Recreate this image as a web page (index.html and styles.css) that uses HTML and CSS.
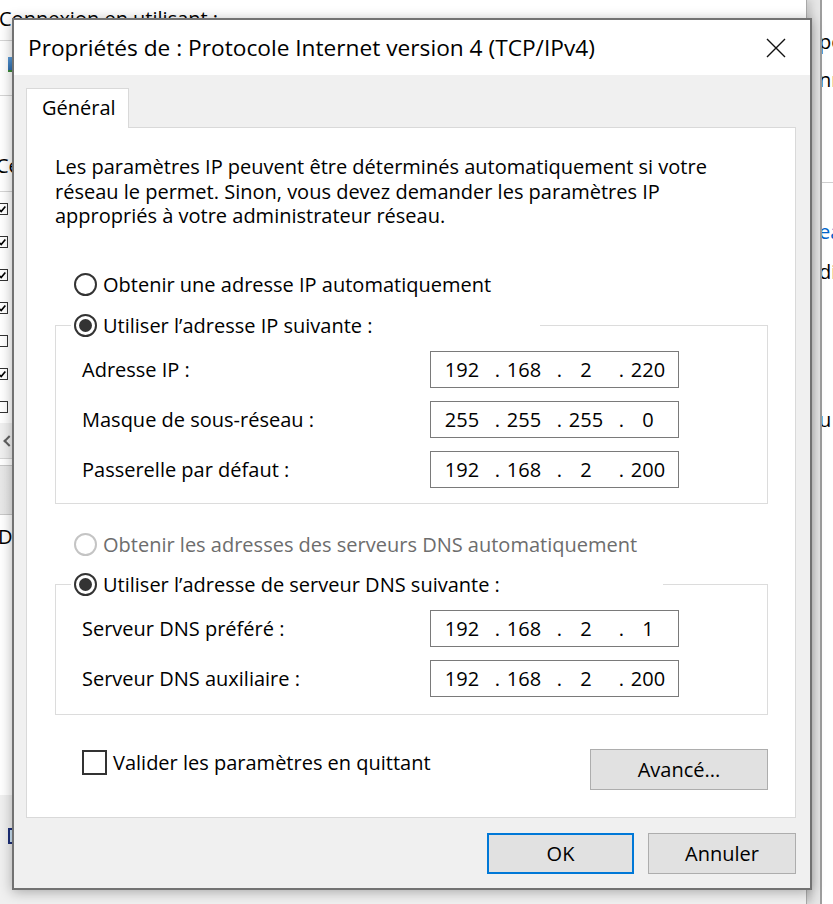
FILE: index.html
```html
<!DOCTYPE html>
<html lang="fr">
<head>
<meta charset="utf-8">
<title>Propriétés de : Protocole Internet version 4 (TCP/IPv4)</title>
<link rel="stylesheet" href="styles.css">
</head>
<body>
<div class="desktop">
  <div class="parent-win">
    <div class="pw-caption">Connexion en utilisant :</div>
    <div class="pw-adapter"><span class="pw-adapter-icon"></span></div>
    <div class="pw-label">Cette connexion utilise les éléments suivants :</div>
    <ul class="pw-list">
      <li><span class="pw-check"><svg viewBox="0 0 12 12"><path d="M2 6 L5 9 L10 3"/></svg></span></li>
      <li><span class="pw-check"><svg viewBox="0 0 12 12"><path d="M2 6 L5 9 L10 3"/></svg></span></li>
      <li><span class="pw-check"><svg viewBox="0 0 12 12"><path d="M2 6 L5 9 L10 3"/></svg></span></li>
      <li><span class="pw-check"><svg viewBox="0 0 12 12"><path d="M2 6 L5 9 L10 3"/></svg></span></li>
      <li><span class="pw-check"></span></li>
      <li><span class="pw-check"><svg viewBox="0 0 12 12"><path d="M2 6 L5 9 L10 3"/></svg></span></li>
      <li><span class="pw-check"></span></li>
    </ul>
    <div class="pw-scroll"><span class="pw-arrow"></span></div>
    <div class="pw-btnrow"></div>
    <div class="pw-desc">Description</div>
    <div class="pw-footer"><span class="pw-focus"></span></div>
  </div>

  <div class="right-win">
    <div class="rw-line rw-1">pe</div>
    <div class="rw-line rw-2">nn</div>
    <div class="rw-sep"></div>
    <div class="rw-line rw-3 rw-link">ea</div>
    <div class="rw-line rw-4">di</div>
    <div class="rw-line rw-5">u</div>
  </div>

  <div class="dialog">
    <div class="titlebar">
      <span class="title">Propriétés de : Protocole Internet version 4 (TCP/IPv4)</span>
      <svg class="close" viewBox="0 0 20 20" aria-label="Fermer"><path d="M1 1 L19 19 M19 1 L1 19" /></svg>
    </div>
    <div class="dlg-body">
      <div class="tabs"><div class="tab">Général</div></div>
      <div class="panel">
        <p class="intro">Les paramètres IP peuvent être déterminés automatiquement si votre<br>réseau le permet. Sinon, vous devez demander les paramètres IP<br>appropriés à votre administrateur réseau.</p>

        <label class="radio-row first"><span class="radio"></span><span>Obtenir une adresse IP automatiquement</span></label>

        <fieldset class="group group-ip">
          <legend class="legend legend-ip"><span class="radio checked"></span><span>Utiliser l’adresse IP suivante :</span></legend>
          <div class="rows">
            <div class="field-row"><span class="field-label">Adresse IP :</span>
              <span class="ip"><span class="oct">192</span><span class="dot">.</span><span class="oct">168</span><span class="dot">.</span><span class="oct">2</span><span class="dot">.</span><span class="oct">220</span></span></div>
            <div class="field-row"><span class="field-label">Masque de sous-réseau :</span>
              <span class="ip"><span class="oct">255</span><span class="dot">.</span><span class="oct">255</span><span class="dot">.</span><span class="oct">255</span><span class="dot">.</span><span class="oct">0</span></span></div>
            <div class="field-row"><span class="field-label">Passerelle par défaut :</span>
              <span class="ip"><span class="oct">192</span><span class="dot">.</span><span class="oct">168</span><span class="dot">.</span><span class="oct">2</span><span class="dot">.</span><span class="oct">200</span></span></div>
          </div>
        </fieldset>

        <label class="radio-row disabled"><span class="radio"></span><span>Obtenir les adresses des serveurs DNS automatiquement</span></label>

        <fieldset class="group group-dns">
          <legend class="legend legend-dns"><span class="radio checked"></span><span>Utiliser l’adresse de serveur DNS suivante :</span></legend>
          <div class="rows rows-dns">
            <div class="field-row"><span class="field-label">Serveur DNS préféré :</span>
              <span class="ip"><span class="oct">192</span><span class="dot">.</span><span class="oct">168</span><span class="dot">.</span><span class="oct">2</span><span class="dot">.</span><span class="oct">1</span></span></div>
            <div class="field-row"><span class="field-label">Serveur DNS auxiliaire :</span>
              <span class="ip"><span class="oct">192</span><span class="dot">.</span><span class="oct">168</span><span class="dot">.</span><span class="oct">2</span><span class="dot">.</span><span class="oct">200</span></span></div>
          </div>
        </fieldset>

        <div class="bottom-row">
          <label class="check-row"><span class="checkbox"></span><span>Valider les paramètres en quittant</span></label>
          <button class="btn btn-adv" type="button">Avancé...</button>
        </div>
      </div>
      <div class="buttons">
        <button class="btn btn-ok" type="button">OK</button>
        <button class="btn" type="button">Annuler</button>
      </div>
    </div>
  </div>
</div>
</body>
</html>
```

FILE: styles.css
```css
* { box-sizing: border-box; }
html, body { margin: 0; padding: 0; }
body {
  width: 833px;
  height: 904px;
  overflow: hidden;
  background: #fff;
  font-family: "Open Sans", "Noto Sans", sans-serif;
  font-size: 20px;
  color: #000;
}
.desktop {
  position: relative;
  width: 833px;
  height: 904px;
  overflow: hidden;
  background: #e6e6e6;
}

/* ---------- parent window (behind, left) ---------- */
.parent-win {
  position: absolute;
  left: 0;
  top: 0;
  width: 807px;
  height: 904px;
  background: #fff;
  border-right: 1px solid #a8a8a8;
  box-shadow: 4px 0 8px rgba(0,0,0,.16);
  display: flex;
  flex-direction: column;
  overflow: hidden;
  z-index: 1;
}
.pw-caption {
  margin: 5px 0 0 -1px;
  line-height: 28px;
  white-space: nowrap;
}
.pw-adapter {
  margin-top: 7px;
  height: 56px;
  border-top: 1px solid #d5d5d5;
  border-bottom: 1px solid #d5d5d5;
  padding: 16px 0 0 8px;
}
.pw-adapter-icon {
  display: block;
  width: 18px;
  height: 15px;
  background: linear-gradient(#5a9bd8, #2f6fb0);
  border-bottom: 2px solid #3b8a3b;
}
.pw-label {
  margin: 56px 0 0 -4px;
  line-height: 28px;
  white-space: nowrap;
}
.pw-list {
  list-style: none;
  margin: 11px 0 0 0;
  padding: 0;
  border-top: 1px solid #d5d5d5;
}
.pw-list li {
  height: 33px;
  display: flex;
  align-items: center;
}
.pw-check {
  width: 12px;
  height: 12px;
  margin-left: -4px;
  border: 1px solid #333;
  background: #fff;
  display: flex;
}
.pw-check svg {
  width: 10px;
  height: 10px;
  fill: none;
  stroke: #000;
  stroke-width: 2;
}
.pw-scroll {
  height: 36px;
  background: #f0f0f0;
  border-bottom: 1px solid #d5d5d5;
  display: flex;
  align-items: center;
  padding-left: 5px;
}
.pw-arrow {
  width: 8px;
  height: 8px;
  border-left: 2px solid #606060;
  border-bottom: 2px solid #606060;
  transform: rotate(45deg);
}
.pw-btnrow {
  margin-top: 6px;
  height: 50px;
  background: linear-gradient(90deg, #e8e8e8, #d8d8d8);
  border-top: 1px solid #c8c8c8;
  border-bottom: 1px solid #c8c8c8;
}
.pw-desc {
  margin: 8px 0 0 -2px;
  line-height: 28px;
  white-space: nowrap;
}
.pw-footer {
  margin-top: 244px;
  flex: 1;
  background: #f0f0f0;
  padding: 33px 0 0 8px;
}
.pw-focus {
  display: block;
  width: 14px;
  height: 16px;
  border: 2px solid #1c2f7a;
  background: #cce4f7;
}

/* ---------- right window (behind) ---------- */
.right-win {
  position: absolute;
  left: 820px;
  top: 0;
  width: 60px;
  height: 904px;
  background: #fff;
  border-left: 2px solid #9e9e9e;
  overflow: hidden;
  display: flex;
  flex-direction: column;
}
.rw-line {
  line-height: 28px;
  margin-left: -3px;
  white-space: nowrap;
}
.rw-1 { margin-top: 28px; }
.rw-2 { margin-top: 10px; }
.rw-sep { margin-top: 88px; height: 1px; background: #cfcfcf; }
.rw-3 { margin-top: 35px; }
.rw-4 { margin-top: 12px; }
.rw-5 { margin-top: 120px; }
.rw-link { color: #0066cc; }

/* ---------- dialog ---------- */
.dialog {
  position: absolute;
  left: 12px;
  top: 18px;
  width: 800px;
  height: 872px;
  border: 2px solid #727272;
  background: #f0f0f0;
  box-shadow: 0 2px 12px rgba(0,0,0,.3);
  display: flex;
  flex-direction: column;
  z-index: 2;
}
.titlebar {
  height: 55px;
  flex: none;
  background: #fff;
  display: flex;
  align-items: center;
  justify-content: space-between;
  padding: 0 24px 0 14px;
}
.title {
  font-size: 22.7px;
  white-space: nowrap;
}
.close {
  width: 20px;
  height: 20px;
  fill: none;
  stroke: #111;
  stroke-width: 1.4;
}
.dlg-body {
  flex: 1;
  display: flex;
  flex-direction: column;
  padding: 13px 14px 14px 12px;
}
.tabs {
  height: 39px;
  display: flex;
}
.tab {
  position: relative;
  z-index: 1;
  width: 103px;
  height: 40px;
  border: 1px solid #d9d9d9;
  border-bottom: none;
  background: #fff;
  padding-left: 15px;
  line-height: 38px;
}
.panel {
  height: 691px;
  flex: none;
  background: #fff;
  border: 1px solid #d9d9d9;
  padding: 27px 27px 0 28px;
  display: flex;
  flex-direction: column;
}
.intro {
  margin: 0;
  line-height: 24.5px;
  white-space: nowrap;
}

.radio-row {
  display: flex;
  align-items: center;
  gap: 6px;
  height: 30px;
  padding-left: 19px;
  white-space: nowrap;
}
.radio-row.first { margin-top: 41px; }
.radio-row.disabled { margin-top: 26px; color: #6d6d6d; }
.radio {
  flex: none;
  width: 23px;
  height: 23px;
  border: 2px solid #333;
  border-radius: 50%;
  background: #fff;
  display: grid;
  place-items: center;
}
.radio.checked::after {
  content: "";
  width: 13px;
  height: 13px;
  border-radius: 50%;
  background: #333;
}
.disabled .radio { border-color: #c4c4c4; }

.group {
  margin: 10px 0 0 0;
  padding: 0;
  border: 1px solid #dcdcdc;
  min-width: 0;
}
.group-ip { margin-top: 11px; }
.legend {
  margin-left: 15px;
  padding: 0 3px;
  height: 30px;
  display: flex;
  align-items: center;
  gap: 6px;
  white-space: nowrap;
}
.legend-ip { width: 469px; }
.legend-dns { width: 592px; }
.rows {
  display: flex;
  flex-direction: column;
  gap: 13px;
  padding: 10px 0 15px 26px;
}
.rows-dns { padding-bottom: 17px; }
.field-row {
  display: flex;
  align-items: center;
  height: 37px;
}
.field-label {
  width: 348px;
  white-space: nowrap;
}
.ip {
  width: 249px;
  height: 37px;
  border: 1px solid #7a7a7a;
  background: #fff;
  display: flex;
  align-items: center;
  padding-left: 5px;
}
.oct {
  width: 52px;
  text-align: center;
}
.dot {
  width: 12px;
  margin-right: -2px;
  text-align: right;
}

.bottom-row {
  margin-top: 34px;
  display: flex;
  justify-content: space-between;
  align-items: flex-start;
  padding-left: 27px;
}
.check-row {
  display: flex;
  align-items: center;
  gap: 6px;
  height: 30px;
  margin-top: -1px;
  white-space: nowrap;
}
.checkbox {
  width: 25px;
  height: 25px;
  border: 2px solid #333;
  background: #fff;
}

.btn {
  font: inherit;
  color: #000;
  width: 148px;
  height: 41px;
  padding: 0;
  background: #e1e1e1;
  border: 1px solid #adadad;
  border-radius: 0;
}
.btn-adv { width: 178px; }
.btn-ok {
  width: 147px;
  border: 2px solid #0078d7;
}
.buttons {
  margin-top: 15px;
  display: flex;
  justify-content: flex-end;
  gap: 14px;
}
```
